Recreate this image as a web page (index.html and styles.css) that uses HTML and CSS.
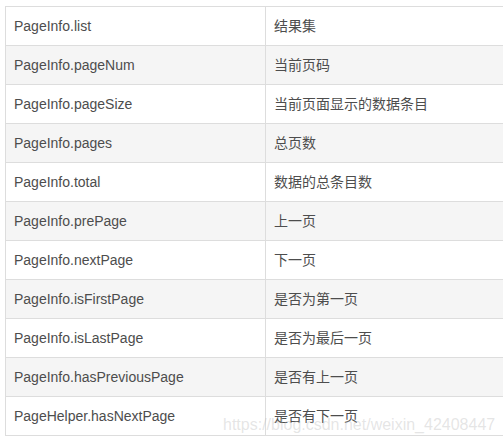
FILE: index.html
```html
<!DOCTYPE html>
<html>
<head>
<meta charset="utf-8">
<link rel="stylesheet" href="styles.css">
</head>
<body>
<div class="wrap">
<table class="info">
<tr><td class="key">PageInfo.list</td><td class="val">结果集</td></tr>
<tr><td class="key">PageInfo.pageNum</td><td class="val">当前页码</td></tr>
<tr><td class="key">PageInfo.pageSize</td><td class="val">当前页面显示的数据条目</td></tr>
<tr><td class="key">PageInfo.pages</td><td class="val">总页数</td></tr>
<tr><td class="key">PageInfo.total</td><td class="val">数据的总条目数</td></tr>
<tr><td class="key">PageInfo.prePage</td><td class="val">上一页</td></tr>
<tr><td class="key">PageInfo.nextPage</td><td class="val">下一页</td></tr>
<tr><td class="key">PageInfo.isFirstPage</td><td class="val">是否为第一页</td></tr>
<tr><td class="key">PageInfo.isLastPage</td><td class="val">是否为最后一页</td></tr>
<tr><td class="key">PageInfo.hasPreviousPage</td><td class="val">是否有上一页</td></tr>
<tr><td class="key">PageHelper.hasNextPage</td><td class="val">是否有下一页</td></tr>
</table>
<div class="watermark">https://blog.csdn.net/weixin_42408447</div>
</div>
</body>
</html>
```
FILE: styles.css
```css
html, body {
  margin: 0;
  padding: 0;
  background: #fff;
  overflow: hidden;
}
.wrap {
  position: relative;
  padding: 6px 0 0 5px;
  width: 498px;
}
.info {
  border-collapse: collapse;
  width: 498px;
  font-family: Arial, "Liberation Sans", "Noto Sans CJK SC", sans-serif;
  font-size: 14px;
  color: #4d4d4d;
}
.info td {
  border: 1px solid #dddddd;
  padding: 8px 8px;
  line-height: 22px;
  height: 22px;
  vertical-align: middle;
  white-space: nowrap;
}
.info td.val {
  border-right: none;
}
.info tr:nth-child(even) td {
  background: #f5f5f5;
}
.key {
  width: 243px;
}
.watermark {
  position: absolute;
  left: 223px;
  top: 415px;
  font-family: Arial, "Liberation Sans", sans-serif;
  font-size: 16px;
  line-height: 20px;
  color: rgba(180, 180, 180, 0.35);
  white-space: nowrap;
}
```
